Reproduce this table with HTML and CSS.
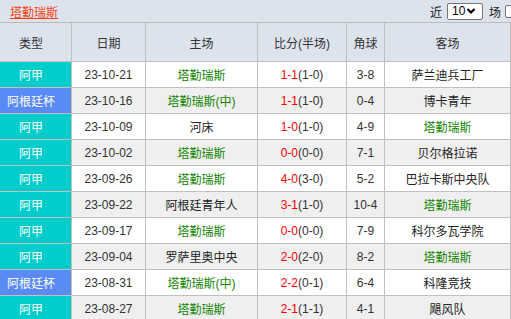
FILE: index.html
```html
<!DOCTYPE html>
<html>
<head>
<meta charset="utf-8">
<link rel="stylesheet" href="styles.css">
</head>
<body>
<div class="topbar">
  <a class="title" href="#">塔勤瑞斯</a>
  <div class="ctrl">
    <span class="lbl">近</span>
    <span class="sel">10<svg width="10" height="8" viewBox="0 0 10 8"><path d="M1.5 2 L5 5.5 L8.5 2" fill="none" stroke="#000" stroke-width="2.2"/></svg></span>
    <span class="lbl">场</span>
    <span class="chk"></span>
  </div>
</div>
<div class="tbl">
  <div class="row head">
    <div class="c type">类型</div><div class="c">日期</div><div class="c">主场</div><div class="c">比分(半场)</div><div class="c">角球</div><div class="c">客场</div>
  </div>
  <div class="row">
    <div class="c type cyan">阿甲</div><div class="c date">23-10-21</div><div class="c g">塔勤瑞斯</div><div class="c sc"><em>1-1</em>(1-0)</div><div class="c date">3-8</div><div class="c">萨兰迪兵工厂</div>
  </div>
  <div class="row alt">
    <div class="c type blue">阿根廷杯</div><div class="c date">23-10-16</div><div class="c g">塔勤瑞斯(中)</div><div class="c sc"><em>1-1</em>(1-0)</div><div class="c date">0-4</div><div class="c">博卡青年</div>
  </div>
  <div class="row">
    <div class="c type cyan">阿甲</div><div class="c date">23-10-09</div><div class="c">河床</div><div class="c sc"><em>1-0</em>(1-0)</div><div class="c date">4-9</div><div class="c g">塔勤瑞斯</div>
  </div>
  <div class="row alt">
    <div class="c type cyan">阿甲</div><div class="c date">23-10-02</div><div class="c g">塔勤瑞斯</div><div class="c sc"><em>0-0</em>(0-0)</div><div class="c date">7-1</div><div class="c">贝尔格拉诺</div>
  </div>
  <div class="row">
    <div class="c type cyan">阿甲</div><div class="c date">23-09-26</div><div class="c g">塔勤瑞斯</div><div class="c sc"><em>4-0</em>(3-0)</div><div class="c date">5-2</div><div class="c">巴拉卡斯中央队</div>
  </div>
  <div class="row alt">
    <div class="c type cyan">阿甲</div><div class="c date">23-09-22</div><div class="c">阿根廷青年人</div><div class="c sc"><em>3-1</em>(1-0)</div><div class="c date">10-4</div><div class="c g">塔勤瑞斯</div>
  </div>
  <div class="row">
    <div class="c type cyan">阿甲</div><div class="c date">23-09-17</div><div class="c g">塔勤瑞斯</div><div class="c sc"><em>0-0</em>(0-0)</div><div class="c date">7-9</div><div class="c">科尔多瓦学院</div>
  </div>
  <div class="row alt">
    <div class="c type cyan">阿甲</div><div class="c date">23-09-04</div><div class="c">罗萨里奥中央</div><div class="c sc"><em>2-0</em>(2-0)</div><div class="c date">8-2</div><div class="c g">塔勤瑞斯</div>
  </div>
  <div class="row">
    <div class="c type blue">阿根廷杯</div><div class="c date">23-08-31</div><div class="c g">塔勤瑞斯(中)</div><div class="c sc"><em>2-2</em>(0-1)</div><div class="c date">6-4</div><div class="c">科隆竞技</div>
  </div>
  <div class="row alt">
    <div class="c type cyan">阿甲</div><div class="c date">23-08-27</div><div class="c g">塔勤瑞斯</div><div class="c sc"><em>2-1</em>(1-1)</div><div class="c date">4-1</div><div class="c">飓风队</div>
  </div>
</div>
</body>
</html>
```
FILE: styles.css
```css
html, body {
  margin: 0;
  padding: 0;
  overflow: hidden;
  background: #fff;
}
body {
  font-family: "Liberation Sans", "Noto Sans CJK SC", sans-serif;
  font-size: 12px;
  color: #222;
}
.topbar {
  height: 22px;
  background: #dce3ec;
  border-bottom: 1px solid #bcbcbc;
  display: flex;
  align-items: center;
  justify-content: space-between;
}
.title {
  margin-left: 10px;
  color: #f3400f;
  text-decoration: underline;
  font-size: 12px;
  line-height: 14px;
  margin-top: 3px;
}
.ctrl {
  display: flex;
  align-items: center;
  flex: none;
  margin-right: -7px;
}
.lbl {
  font-size: 12px;
  color: #222;
}
.sel {
  display: flex;
  align-items: center;
  box-sizing: border-box;
  width: 36px;
  height: 17px;
  margin: 0 6px 0 5px;
  border: 1px solid #767676;
  border-radius: 2px;
  background: #fff;
  padding-left: 4px;
  font-size: 12px;
  color: #000;
}
.sel svg {
  margin-left: 1px;
}
.chk {
  display: inline-block;
  flex: none;
  width: 13px;
  height: 13px;
  box-sizing: border-box;
  border: 1px solid #767676;
  border-radius: 2px;
  background: #fff;
  margin-left: 4px;
}
.tbl {
  display: flex;
  flex-direction: column;
}
.row {
  display: grid;
  grid-template-columns: 72px 74px 112px 89px 38px 1fr;
  height: 26px;
}
.row.head {
  height: 39px;
  background: #dce3ec;
}
.row.alt {
  background: #efefef;
}
.c {
  box-sizing: border-box;
  border-right: 1px solid #c0c0c0;
  border-bottom: 1px solid #c0c0c0;
  display: flex;
  align-items: center;
  justify-content: center;
  white-space: nowrap;
  color: #222;
}
.head .c {
  color: #333;
}
.type {
  padding-right: 9px;
}
.row .c.cyan {
  background: #00cccc;
  color: #fff;
}
.row .c.blue {
  background: #5a8af3;
  color: #fff;
}
.date {
  color: #333;
}
.row .c.g {
  color: #118400;
}
.sc {
  color: #333;
}
.sc em {
  font-style: normal;
  color: #f00;
}
```
